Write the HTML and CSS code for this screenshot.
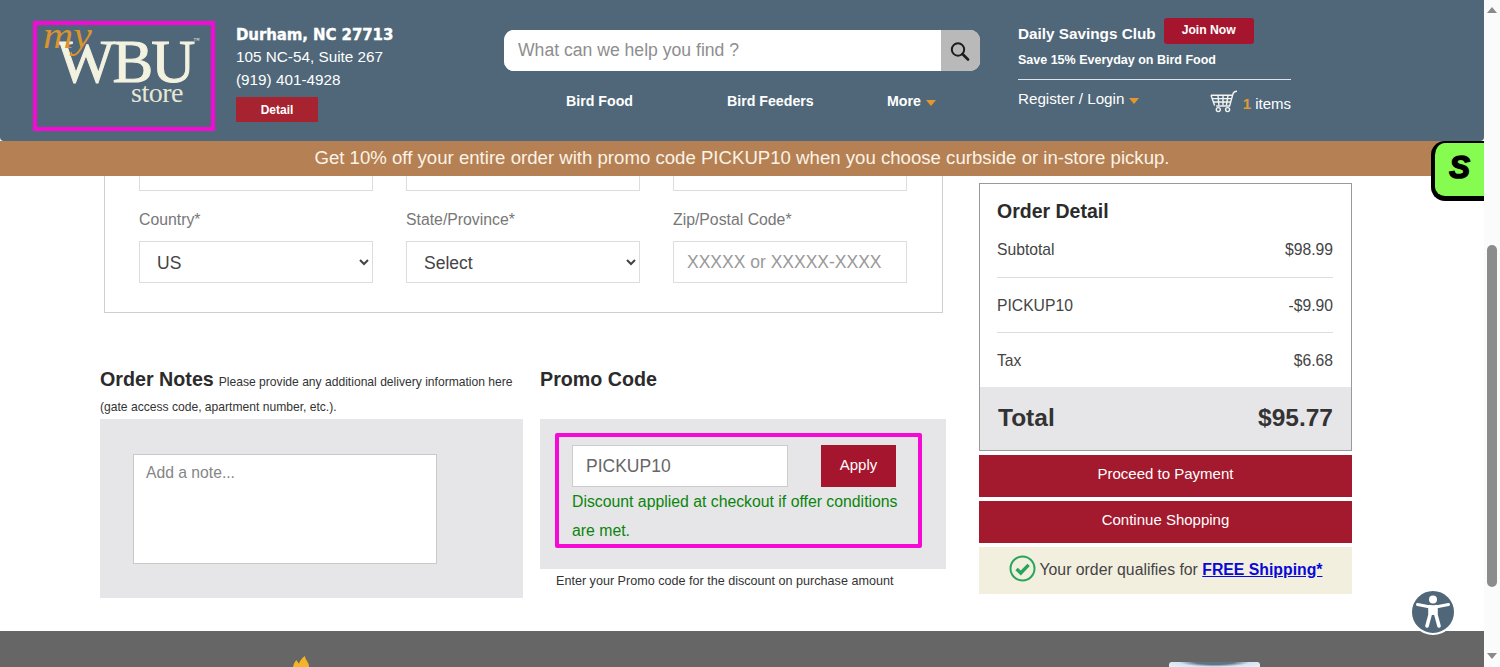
FILE: index.html
```html
<!DOCTYPE html>
<html lang="en">
<head>
<meta charset="utf-8">
<title>Checkout - WBU</title>
<link rel="stylesheet" href="styles.css">
</head>
<body>
<div class="app">
  <div class="page">
    <header class="header">
      <a class="logo">
        <span class="logo-wbu">WBU<sup class="logo-tm">™</sup></span>
        <span class="logo-my">my</span>
        <span class="logo-store">store</span>
      </a>
      <div class="store-info">
        <div class="store-city">Durham, NC 27713</div>
        <div class="store-line store-line-a">105 NC-54, Suite 267</div>
        <div class="store-line store-line-b">(919) 401-4928</div>
        <a class="detail-btn">Detail</a>
      </div>
      <div class="search-col">
        <div class="search">
          <input class="search-input" type="text" placeholder="What can we help you find ?">
          <span class="search-btn">
            <svg width="20" height="20" viewBox="0 0 20 20" fill="none" stroke="#1d1d1d" stroke-width="2"><circle cx="8" cy="8.5" r="6.2"/><path d="M12.500 13l5.500 5.500" stroke-width="2.600" stroke-linecap="round"/></svg>
          </span>
        </div>
        <nav class="nav">
          <a class="nav-food">Bird Food</a>
          <a class="nav-feeders">Bird Feeders</a>
          <a class="nav-more">More<i class="caret"></i></a>
        </nav>
      </div>
      <div class="account">
        <div class="club-top">
          <span class="club-name">Daily Savings Club</span>
          <a class="join-btn">Join Now</a>
        </div>
        <div class="club-sub">Save 15% Everyday on Bird Food</div>
        <div class="account-row">
          <a class="login">Register / Login<i class="caret"></i></a>
          <a class="cart">
            <svg width="28" height="23" viewBox="0 0 28 23" fill="none" stroke="#f4f4f0" stroke-width="1.400"><path d="M27 1.200c-2.600 0-3.400.7-4 2.600L19.600 16H6.200"/><path d="M1 5.200h21.200M2.300 8.600h18.900M3.500 12h16.800M4.600 15.600L1 5.200M8 5.400l.9 10M13 5.400v10M18 5.400l-1.600 10"/><circle cx="8.300" cy="19.600" r="2"/><circle cx="17.600" cy="19.600" r="2"/></svg>
            <span class="cart-label"><span class="cart-count">1</span> items</span>
          </a>
        </div>
      </div>
    </header>
    <div class="promo-bar">Get 10% off your entire order with promo code PICKUP10 when you choose curbside or in-store pickup.</div>
    <main class="main">
      <div class="left">
        <section class="address-card">
          <div class="field-row field-row-cut">
            <span class="cut-input"></span>
            <span class="cut-input"></span>
            <span class="cut-input"></span>
          </div>
          <div class="field-row">
            <div class="field">
              <label class="field-label">Country*</label>
              <select class="control"><option>US</option></select>
            </div>
            <div class="field">
              <label class="field-label">State/Province*</label>
              <select class="control"><option>Select</option></select>
            </div>
            <div class="field">
              <label class="field-label">Zip/Postal Code*</label>
              <input class="control control-input" type="text" placeholder="XXXXX or XXXXX-XXXX">
            </div>
          </div>
        </section>
        <div class="extras">
          <section class="notes">
            <div class="extra-head">
              <div class="extra-line"><h2 class="extra-title">Order Notes</h2><span class="extra-hint extra-hint-first">Please provide any additional delivery information here</span></div>
              <div class="extra-line extra-line-second"><span class="extra-hint">(gate access code, apartment number, etc.).</span></div>
            </div>
            <div class="notes-panel">
              <textarea class="note-area" placeholder="Add a note..."></textarea>
            </div>
          </section>
          <section class="promo">
            <div class="extra-head"><h2 class="extra-title">Promo Code</h2></div>
            <div class="promo-panel">
              <div class="promo-box">
                <div class="promo-form">
                  <input class="promo-input" type="text" value="PICKUP10">
                  <button class="apply-btn">Apply</button>
                </div>
                <p class="promo-ok">Discount applied at checkout if offer conditions are met.</p>
              </div>
            </div>
            <p class="promo-caption">Enter your Promo code for the discount on purchase amount</p>
          </section>
        </div>
      </div>
      <aside class="right">
        <div class="order">
          <h2 class="order-title">Order Detail</h2>
          <div class="order-row order-row-first"><span>Subtotal</span><span>$98.99</span></div>
          <div class="order-row"><span>PICKUP10</span><span>-$9.90</span></div>
          <div class="order-row order-row-last"><span>Tax</span><span>$6.68</span></div>
          <div class="order-total"><span>Total</span><span>$95.77</span></div>
        </div>
        <a class="action-btn">Proceed to Payment</a>
        <a class="action-btn">Continue Shopping</a>
        <div class="shipping">
          <svg class="check" width="27" height="27" viewBox="0 0 27 27" fill="none"><circle cx="13.500" cy="13.500" r="12" stroke="#27a55a" stroke-width="2"/><path d="M7.600 14l4.200 4 7.800-8.200" stroke="#27a55a" stroke-width="3.400"/></svg>
          <span>Your order qualifies for <a class="ship-link">FREE Shipping*</a></span>
        </div>
      </aside>
    </main>
    <footer class="footer">
      <svg class="flame" width="18" height="11" viewBox="0 0 18 11"><path d="M0 11c.5-2.500 1.500-5 3.500-7 .5 1.200 1.500 2.500 2.500 3.500C7 4.500 9 2 12 0c0 2.500 1.500 4 2.500 6 1 1.500 1.500 3 1.500 5z" fill="#f5b325"/></svg>
      <span class="badge"></span>
    </footer>
    <a class="sidekick">S</a>
    <a class="a11y">
      <svg width="46" height="46" viewBox="0 0 46 46"><circle cx="23" cy="23" r="22" fill="#4f6779" stroke="#fff" stroke-width="2"/><circle cx="23" cy="10.500" r="4" fill="#fff"/><path d="M7.500 15.500L19 17.700h8l11.500-2.200" stroke="#fff" stroke-width="3" fill="none" stroke-linecap="round"/><path d="M20 17.500v8.500L17 37M26 17.500v8.500L29 37" stroke="#fff" stroke-width="3.600" fill="none" stroke-linecap="round"/><path d="M20 17h6v9h-6z" fill="#fff"/></svg>
    </a>
  </div>
  <div class="scrollbar">
    <i class="sb-up"></i>
    <i class="sb-thumb"></i>
    <i class="sb-down"></i>
  </div>
</div>
</body>
</html>
```
FILE: styles.css
```css
* { box-sizing: border-box; }
html, body { margin: 0; height: 100%; overflow: hidden; }
body { font-family: "Liberation Sans", Arial, sans-serif; color: #2b2b2b; background: #fff; }
a { cursor: pointer; }
.app { display: flex; width: 1500px; height: 667px; overflow: hidden; }
.page { position: relative; width: 1484px; height: 667px; display: flex; flex-direction: column; flex: none; }

/* header */
.header { height: 141px; flex: none; background: #4f6779; color: #fff; display: flex; align-items: flex-start; padding: 21px 0 0 33px; border-radius: 0 0 4px 4px; }
.logo { position: relative; display: block; width: 182px; height: 110px; border: 4px solid #f609d5; flex: none; font-family: "Liberation Serif", serif; color: #f3f1df; }
.logo-my { position: absolute; left: 6px; top: -10px; font-style: italic; font-size: 38px; line-height: 40px; color: #d9932f; transform: scaleX(1.1); transform-origin: left; }
.logo-wbu { position: absolute; left: 20px; top: 15px; font-size: 61px; line-height: 44px; letter-spacing: -2px; font-weight: 400; -webkit-text-stroke: 1px #f3f1df; white-space: nowrap; }
.logo-tm { position: absolute; right: -6px; top: -3px; font-size: 6px; line-height: 6px; letter-spacing: 0; -webkit-text-stroke: 0; }
.logo-store { position: absolute; left: 94px; top: 58px; font-size: 28px; line-height: 20px; color: #e8e7d6; letter-spacing: -.5px; }
.store-info { width: 268px; margin-left: 21px; flex: none; padding-top: 5px; }
.store-city { font-family: "DejaVu Sans", sans-serif; font-weight: 700; font-size: 15px; line-height: 19px; letter-spacing: -.1px; -webkit-text-stroke: .35px #fff; }
.store-line { font-size: 15.300px; }
.store-line-a { line-height: 24px; }
.store-line-b { line-height: 21px; }
.detail-btn { display: flex; align-items: center; justify-content: center; width: 82px; height: 25px; margin-top: 7px; background: #a6232f; color: #fff; font-size: 12px; font-weight: 700; }
.search-col { width: 476px; flex: none; padding-top: 9px; }
.search { display: flex; height: 41px; border-radius: 10px; overflow: hidden; background: #fff; }
.search-input { flex: 1; min-width: 0; border: 0; padding: 0 14px; font: 17.600px "Liberation Sans", Arial, sans-serif; background: #fff; outline: 0; }
.search-input::placeholder { color: #8e8e8e; opacity: 1; }
.search-btn { width: 39px; background: #b9b9b9; display: flex; align-items: center; justify-content: center; padding-right: 2px; }
.nav { position: relative; display: flex; font-size: 14.200px; font-weight: 700; line-height: 18px; margin-top: 21px; padding-left: 62px; }
.nav-food { width: 161px; }
.nav-feeders { width: 160px; }
.nav-more { display: flex; align-items: center; }
.caret { display: inline-block; width: 0; height: 0; margin-left: 5px; margin-top: 3px; border-style: solid; border-width: 6px 5px 0; border-color: #e7962c transparent transparent; }
.account { width: 273px; margin-left: 38px; flex: none; margin-top: -3px; }
.club-top { display: flex; align-items: flex-start; height: 26px; }
.club-name { font-weight: 700; font-size: 15.300px; line-height: 18px; margin-top: 7px; }
.join-btn { display: flex; align-items: center; justify-content: center; width: 90px; height: 26px; margin-left: 8px; padding-bottom: 2px; background: #a6152e; border-radius: 3px; font-size: 12.200px; font-weight: 700; }
.club-sub { font-size: 12.500px; font-weight: 700; line-height: 16px; margin-top: 8px; border-bottom: 1px solid #dbe3ec; height: 28px; }
.account-row { display: flex; justify-content: space-between; align-items: flex-start; margin-top: 10px; }
.login { display: flex; align-items: center; font-size: 15.200px; line-height: 18px; }
.cart { display: flex; align-items: flex-end; font-size: 15px; line-height: 18px; height: 23px; }
.cart svg { margin-right: 5px; }
.cart-label { white-space: pre; }
.cart-count { color: #e09a35; font-weight: 700; }

/* promo */
.promo-bar { height: 35px; flex: none; background: #b58053; color: #fbf3e6; font-size: 18.630px; line-height: 34px; text-align: center; }

/* main */
.main { height: 455px; flex: none; display: flex; padding-left: 100px; overflow: hidden; }
.left { width: 846px; flex: none; }
.address-card { width: 839px; height: 137px; margin-left: 4px; padding: 0 34px; border: 1px solid #cfcfcf; border-top: 0; }
.field-row { display: flex; gap: 33.500px; }
.field-row-cut { height: 15px; }
.cut-input { width: 233.500px; height: 15px; background: #fff; border: 1px solid #ddd; border-top: 0; }
.field { width: 233.500px; }
.field-label { display: block; font-size: 15.800px; line-height: 18px; color: #777; margin: 20px 0 12px; }
.control { display: block; width: 233.500px; height: 42px; border: 1px solid #ddd; background: #fff; font: 17.500px "Liberation Sans", Arial, sans-serif; color: #444; padding: 1px 0 0 13px; border-radius: 0; outline: 0; }
.control-input { padding: 0 0 0 13px; }
.control-input::placeholder { color: #999; opacity: 1; }
.extras { display: flex; gap: 17px; margin-top: 54px; }
.notes { width: 423px; flex: none; }
.promo { width: 406px; flex: none; }
.extra-head { height: 52px; line-height: 25px; font-size: 12px; }
.extra-line { height: 25px; }
.extra-line-second { margin-top: 3px; height: 24px; }
.extra-title { display: inline; margin: 0; font-size: 19.700px; font-weight: 700; color: #2b2b2b; }
.extra-hint { font-size: 12.100px; color: #333; }
.extra-hint-first { margin-left: 5px; }
.notes-panel { height: 179px; background: #e6e6e9; padding: 35px 33px; }
.note-area { display: block; width: 304px; height: 110px; border: 1px solid #c9c9c9; background: #fff; padding: 9px 12px; font: 15.700px "Liberation Sans", Arial, sans-serif; resize: none; outline: 0; }
.note-area::placeholder { color: #858585; opacity: 1; }
.promo-panel { height: 150px; background: #e6e6e9; padding: 14px 24px 21px 15px; }
.promo-box { height: 115px; border: 4px solid #f609d5; border-radius: 2px; padding: 8px 0 0 13px; }
.promo-form { display: flex; gap: 33px; }
.promo-input { width: 216px; height: 42px; border: 1px solid #ccc; background: #fff; padding: 0 13px; font: 17.500px "Liberation Sans", Arial, sans-serif; color: #666; outline: 0; border-radius: 0; }
.apply-btn { width: 75px; height: 42px; border: 0; padding: 0 0 3px; background: #a6152e; color: #fff; font: 15px "Liberation Sans", Arial, sans-serif; }
.promo-ok { margin: 1px 0 0; width: 340px; font-size: 15.800px; line-height: 28.500px; color: #0a850a; }
.promo-caption { margin: 5px 0 0 16px; font-size: 12.600px; line-height: 14px; color: #333; white-space: nowrap; }

/* order */
.right { width: 373px; margin-left: 33px; flex: none; padding-top: 7px; }
.order { height: 268px; border: 1px solid #999; display: flex; flex-direction: column; }
.order-title { margin: 16px 0 0 17px; font-size: 19.500px; line-height: 23px; font-weight: 700; color: #2b2b2b; }
.order-row { display: flex; justify-content: space-between; margin: 0 18px 0 17px; height: 55px; padding-top: 19px; line-height: 18px; font-size: 15.700px; border-bottom: 1px solid #ddd; color: #444; }
.order-row-first { margin-top: 17px; padding-top: 1px; height: 38px; }
.order-row-last { border-bottom: 0; height: 54px; }
.order-total { height: 63px; background: #e6e6e9; display: flex; justify-content: space-between; align-items: center; padding: 0 18px 2px; font-size: 24.500px; font-weight: 700; margin-top: auto; color: #333; }
.action-btn { display: flex; justify-content: center; height: 42px; margin-top: 4px; padding-top: 10px; background: #a3192d; color: #fff; font-size: 15px; line-height: 18px; }
.shipping { display: flex; justify-content: center; align-items: center; gap: 4px; height: 47px; margin-top: 4px; padding: 0 0 2px; background: #f3efdf; font-size: 15.800px; color: #444; }
.check { margin-top: -3px; }
.ship-link { color: #0808d8; font-weight: 700; text-decoration: underline; }

/* footer */
.footer { flex: 1; background: #666; display: flex; align-items: flex-start; padding: 25px 0 0 293px; }
.flame { display: block; }
.badge { width: 91px; height: 6px; margin: 6px 0 0 858px; background: radial-gradient(ellipse at 50% 0, #5f7486 0, #5f7486 30%, #d5e4f3 55%, #eef4fa 100%); border-radius: 3px 3px 0 0; }

/* overlays */
.sidekick { position: absolute; right: 0; top: 141px; width: 53px; height: 60px; display: flex; align-items: center; justify-content: center; padding-bottom: 4px; background: #86fb50; border: solid #000; border-width: 2px 0 5px 4px; border-radius: 14px 0 0 14px; color: #000; font: italic 700 31px "Liberation Sans", Arial, sans-serif; -webkit-text-stroke: 1.500px #000; }
.a11y { position: absolute; left: 1410px; top: 589px; width: 46px; height: 46px; display: block; }
.a11y svg { display: block; }

/* scrollbar */
.scrollbar { position: relative; width: 16px; height: 667px; flex: none; background: #fbfbfb; display: flex; flex-direction: column; align-items: center; }
.sb-up { width: 0; height: 0; margin-top: 7px; border-style: solid; border-width: 0 5px 6px; border-color: transparent transparent #8a8a8a; }
.sb-thumb { width: 10px; height: 342px; margin-top: 232px; background: #8c8c8c; border-radius: 5px; }
.sb-down { width: 0; height: 0; margin-top: 66px; border-style: solid; border-width: 6px 5px 0; border-color: #8a8a8a transparent transparent; }
```
